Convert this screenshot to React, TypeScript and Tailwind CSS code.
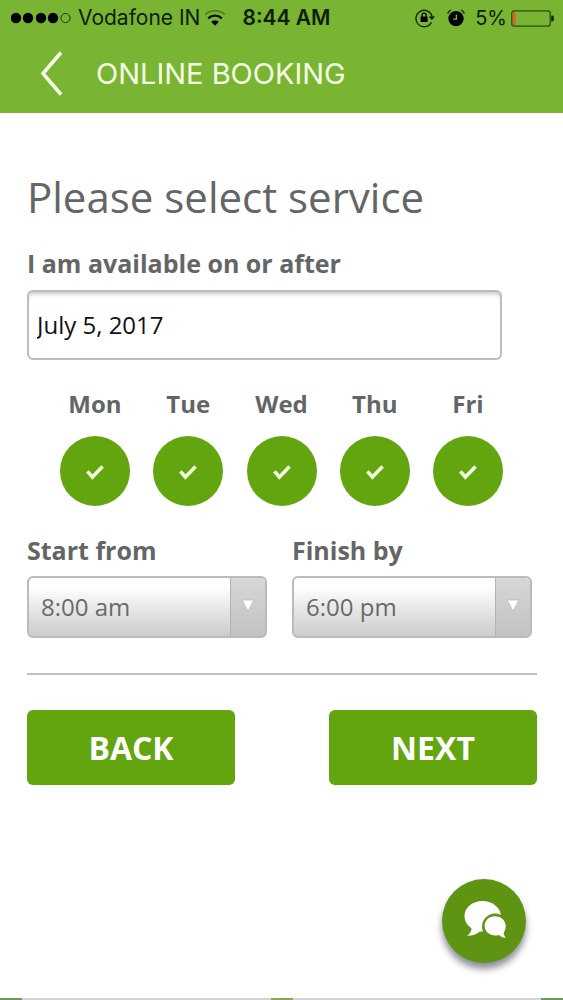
import { useState } from "react";

const initialDays = [
  { id: "mon", label: "Mon", checked: true },
  { id: "tue", label: "Tue", checked: true },
  { id: "wed", label: "Wed", checked: true },
  { id: "thu", label: "Thu", checked: true },
  { id: "fri", label: "Fri", checked: true }
];

const times = ["8:00 am", "10:00 am", "12:00 pm", "2:00 pm", "4:00 pm", "6:00 pm"];

function SignalDots() {
  return (
    <svg width="60" height="12" viewBox="0 0 60 12" aria-hidden>
      {[5, 17, 30, 42].map((x) => (
        <circle key={x} cx={x} cy="6" r="5.2" fill="#000" />
      ))}
      <circle cx="54.5" cy="6" r="4.6" fill="none" stroke="#1c3a08" strokeWidth="1" />
    </svg>
  );
}

function WifiIcon() {
  return (
    <svg width="22" height="16" viewBox="0 0 22 16" fill="none" aria-hidden>
      <path d="M1.2 4.6a14.5 14.5 0 0 1 19.6 0" stroke="#4b7d1c" strokeWidth="1.6" />
      <path d="M4.2 8.4a9.8 9.8 0 0 1 13.6 0" stroke="#051000" strokeWidth="2.4" />
      <path d="M11 15.8 7.2 11.8a5.4 5.4 0 0 1 7.6 0Z" fill="#000" />
    </svg>
  );
}

function RotationLockIcon() {
  return (
    <svg width="20" height="20" viewBox="0 0 20 20" fill="none" aria-hidden>
      <path d="M16.4 14.4A8.2 8.2 0 1 1 17.2 9" stroke="#12290a" strokeWidth="1.4" />
      <path d="M13.6 8.6h6.4l-3.1 3.4Z" fill="#0b1c03" />
      <rect x="5.6" y="8.6" width="7" height="5.4" rx=".6" fill="#000" />
      <path d="M7 9V7.2a2.1 2.1 0 0 1 4.2 0V9" stroke="#000" strokeWidth="1.3" />
    </svg>
  );
}

function AlarmIcon() {
  return (
    <svg width="18" height="18" viewBox="0 0 18 18" fill="none" aria-hidden>
      <circle cx="9" cy="9.6" r="7.7" fill="#000" />
      <path d="M9.4 5.4v4.7H6" stroke="#79b433" strokeWidth="1.4" />
      <path d="M.6 4.4A7 7 0 0 1 4 1M17.4 4.4A7 7 0 0 0 14 1" stroke="#0b1c03" strokeWidth="1.3" />
    </svg>
  );
}

function BatteryIcon() {
  return (
    <svg width="43" height="17" viewBox="0 0 43 17" fill="none" aria-hidden>
      <rect x=".8" y=".8" width="38.4" height="15.4" rx="2.4" stroke="#2b4d10" strokeWidth="1.3" />
      <rect x="2" y="2" width="2.6" height="13" rx=".8" fill="#ee5a2a" />
      <path d="M40.2 5.6h1.2q1.4 0 1.4 1.4v3q0 1.4-1.4 1.4h-1.2Z" fill="#12290a" />
    </svg>
  );
}

function StatusBar() {
  return (
    <div className="flex h-9 items-center justify-between pr-[9px] pl-[11px] font-[Inter,sans-serif] text-[#0c1f03]">
      <div className="flex items-center text-[21px]">
        <SignalDots />
        <span className="ml-[7px]">Vodafone IN</span>
        <span className="ml-1">
          <WifiIcon />
        </span>
        <span className="ml-4 font-semibold">8:44 AM</span>
      </div>
      <div className="flex items-center text-xl">
        <RotationLockIcon />
        <span className="ml-3">
          <AlarmIcon />
        </span>
        <span className="mr-1 ml-[10px]">5%</span>
        <BatteryIcon />
      </div>
    </div>
  );
}

function DayToggle({ id, label, checked, onToggle }: { id: string; label: string; checked: boolean; onToggle: () => void }) {
  return (
    <div className="flex w-[70px] flex-col items-center gap-4">
      <label htmlFor={id} className="text-2xl leading-8 font-bold">
        {label}
      </label>
      <div className="relative h-[70px] w-[70px]">
        <input
          id={id}
          type="checkbox"
          checked={checked}
          onChange={onToggle}
          className="block h-full w-full appearance-none rounded-full bg-[#bdbdbd] checked:bg-[#62a50f]"
        />
        {checked ? (
          <svg className="pointer-events-none absolute inset-0" width="70" height="70" viewBox="0 0 70 70" fill="none" aria-hidden>
            <path d="M27.4 35.4l5 5.6 10.2-10.4" stroke="#f1ffdc" strokeWidth="3.6" />
          </svg>
        ) : null}
      </div>
    </div>
  );
}

function TimeSelect({ id, label, value, onChange }: { id: string; label: string; value: string; onChange: (value: string) => void }) {
  return (
    <div className="flex-1">
      <label htmlFor={id} className="block text-[25px] leading-8 font-bold">
        {label}
      </label>
      <div className="relative mt-[10px]">
        <select
          id={id}
          value={value}
          onChange={(e) => onChange(e.target.value)}
          className="block h-[62px] w-full appearance-none rounded-md border-2 border-[#bcbabc] bg-linear-to-b from-white from-15% to-[#cdcbcd] pr-10 pl-3 text-2xl text-[#6a6a6a]"
        >
          {times.map((time) => (
            <option key={time}>{time}</option>
          ))}
        </select>
        <span className="pointer-events-none absolute inset-y-[2px] right-[2px] flex w-[35px] items-center justify-center rounded-r border-l border-[#b3b1b3] bg-linear-to-b from-[#d8d6d8] to-[#c3c1c3]">
          <svg className="mb-1" width="14" height="13" viewBox="0 0 14 13" aria-hidden>
            <path d="M1 1h12L7 12Z" fill="#fff" stroke="#aaa" strokeWidth=".6" />
          </svg>
        </span>
      </div>
    </div>
  );
}

function ChatIcon() {
  return (
    <svg width="44" height="40" viewBox="-1 1 44 40" aria-hidden>
      <path
        d="M19.5 1C9.5 1 1.5 7.6 1.5 16c0 5 2.8 9.4 7 12.2.2 3-1.7 5.4-4.5 7.6 5.6 0 10-1.6 13-4.4 1 .2 1.8.2 2.6.2C29.5 31.6 38 24.9 38 16.3 38 7.7 29.5 1 19.5 1Z"
        fill="#fff"
      />
      <circle cx="32" cy="26.6" r="13" fill="#5f9312" />
      <path
        d="M32 16.2c-6 0-10.4 4.2-10.4 9.6s4.6 9.8 10.6 9.8c1.4 0 2.6-.2 3.8-.6 1.9 1.9 4 2.8 6.8 2.8-1.3-1.6-2.1-3.4-2-5.4 1.2-1.8 1.9-4 1.9-6.4 0-5.6-4.7-9.8-10.7-9.8Z"
        fill="#fff"
      />
    </svg>
  );
}

export default function App() {
  const [date, setDate] = useState("July 5, 2017");
  const [days, setDays] = useState(initialDays);
  const [start, setStart] = useState("8:00 am");
  const [finish, setFinish] = useState("6:00 pm");

  const toggleDay = (id: string) =>
    setDays((current) => current.map((day) => (day.id === id ? { ...day, checked: !day.checked } : day)));

  return (
    <div className="flex min-h-screen flex-col bg-white font-['Open_Sans',sans-serif] text-[#646567]">
      <header className="bg-[#79b433] pb-[1px]">
        <StatusBar />
        <div className="flex h-[76px] items-center gap-8 pl-10">
          <button type="button" aria-label="Go back">
            <svg width="24" height="46" viewBox="0 0 24 46" fill="none" aria-hidden>
              <path d="M21 1.5 3 22.5l18 21" stroke="#f4ffe6" strokeWidth="3.6" />
            </svg>
          </button>
          <h1 className="font-[Inter,sans-serif] text-[29px] text-[#f4ffe6]">ONLINE BOOKING</h1>
        </div>
      </header>

      <main className="flex-1 pt-14 pr-[26px] pl-[27px]">
        <h2 className="text-[42px] leading-14">Please select service</h2>

        <form onSubmit={(e) => e.preventDefault()}>
          <div className="mt-[22px] mr-[35px]">
            <label htmlFor="available-date" className="block text-[25px] leading-8 font-bold">
              I am available on or after
            </label>
            <input
              id="available-date"
              type="text"
              value={date}
              onChange={(e) => setDate(e.target.value)}
              className="mt-[11px] block h-[70px] w-full rounded-md border-2 border-[#bdbdbd] px-2 pb-[2px] text-2xl text-[#111] inset-shadow-[0_5px_4px_-3px_#c8c8c8]"
            />
          </div>

          <div className="mt-7 flex justify-between pr-[34px] pl-[33px]">
            {days.map((day) => (
              <DayToggle key={day.id} {...day} onToggle={() => toggleDay(day.id)} />
            ))}
          </div>

          <div className="mt-7 mr-[5px] flex gap-[25px]">
            <TimeSelect id="start-from" label="Start from" value={start} onChange={setStart} />
            <TimeSelect id="finish-by" label="Finish by" value={finish} onChange={setFinish} />
          </div>

          <hr className="mt-[35px] border-t-2 border-[#bfbfbf]" />

          <div className="mt-[35px] flex gap-[94px] text-[32px] font-bold text-white">
            <button type="button" className="h-[75px] flex-1 rounded-md bg-[#62a50f]">
              BACK
            </button>
            <button type="submit" className="h-[75px] flex-1 rounded-md bg-[#62a50f]">
              NEXT
            </button>
          </div>
        </form>
      </main>

      <button
        type="button"
        aria-label="Chat"
        className="fixed right-[37px] bottom-[37px] flex h-[84px] w-[84px] items-center justify-center rounded-full bg-[#5f9312] shadow-[0_6px_7px_#8b8d99]"
      >
        <ChatIcon />
      </button>

      <footer className="flex h-[2px] justify-between bg-[#d4d4d4]">
        <span className="w-[22px] bg-[#6f9a55]" />
        <span className="w-[22px] bg-[#8ba758]" />
        <span className="w-[22px] bg-[#6f9a55]" />
      </footer>
    </div>
  );
}
